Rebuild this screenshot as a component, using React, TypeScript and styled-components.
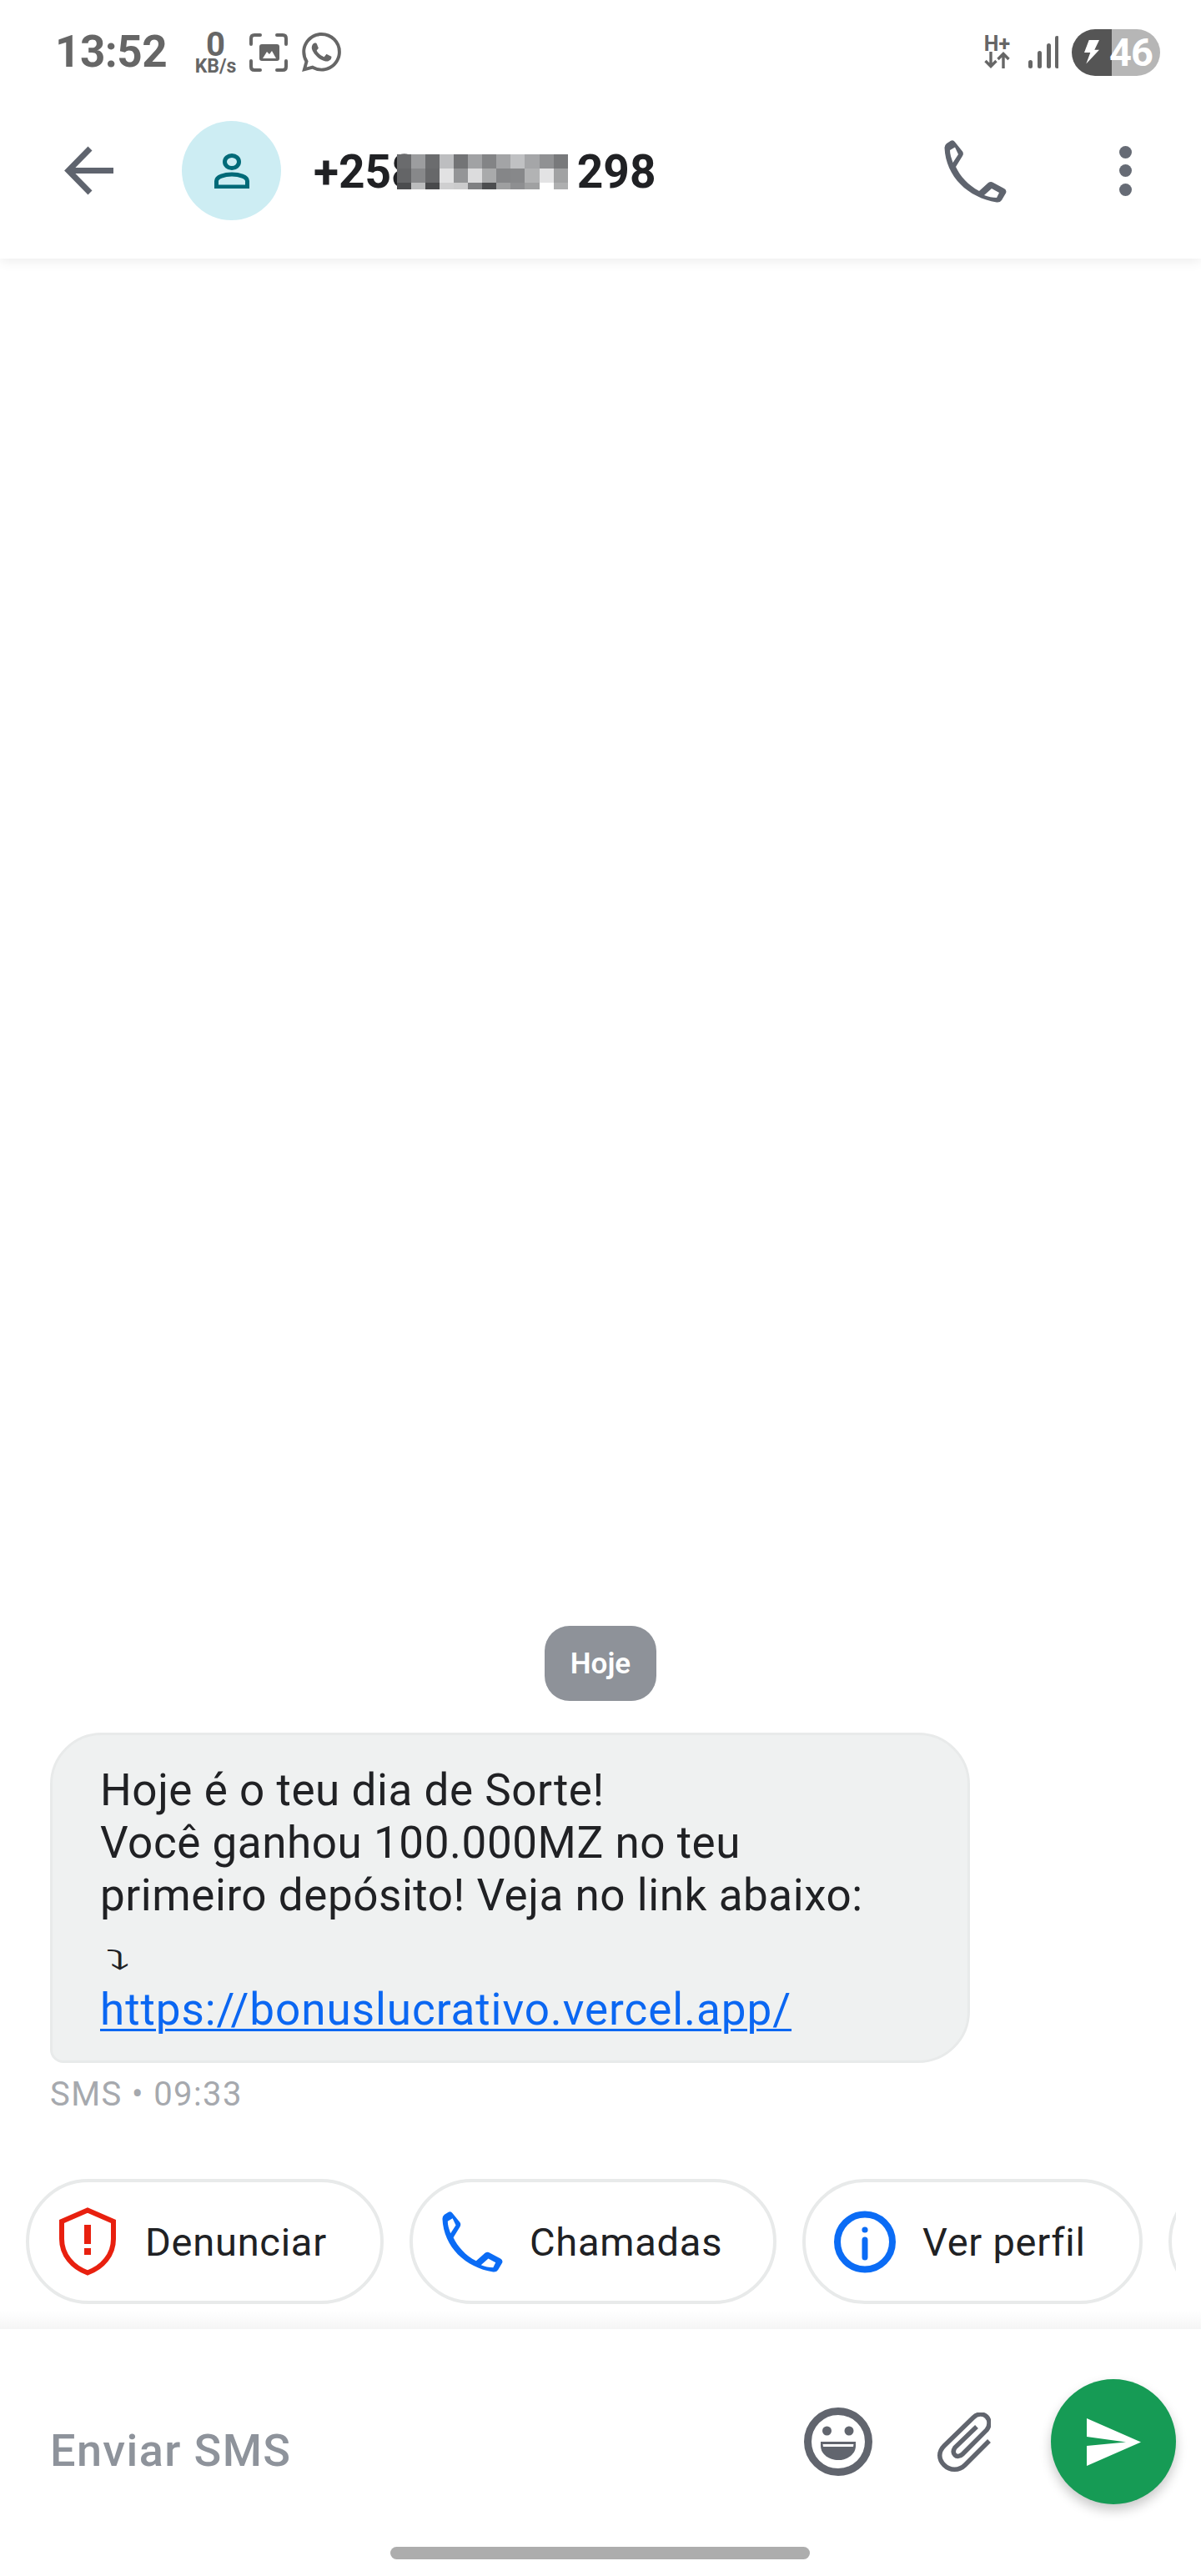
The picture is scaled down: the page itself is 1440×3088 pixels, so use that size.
import React from "react";
import styled, { createGlobalStyle } from "styled-components";
import { SiWhatsapp } from "react-icons/si";

const Global = createGlobalStyle`
  html, body { margin: 0; padding: 0; background: #fff; }
  body { font-family: Roboto, "Liberation Sans", sans-serif; }
`;

const Screen = styled.div`
  width: 1440px;
  height: 3088px;
  display: flex;
  flex-direction: column;
  background: #fff;
  overflow: hidden;
`;

const TopArea = styled.header`
  position: relative;
  z-index: 1;
  flex: none;
  background: #fff;
  box-shadow: 0 3px 14px rgba(0, 0, 0, 0.08);
`;

const StatusBar = styled.div`
  height: 125px;
  display: flex;
  align-items: center;
  padding: 0 49px 0 66px;
  color: #666;
`;

const Time = styled.span`
  font-size: 53px;
  font-weight: 700;
  line-height: 1;
  width: 167px;
  letter-spacing: -0.5px;
`;

const Speed = styled.div`
  width: 51px;
  margin-right: 15px;
  display: flex;
  flex-direction: column;
  align-items: center;
  font-weight: 700;
`;

const SpeedValue = styled.span`
  font-size: 40px;
  line-height: 34px;
`;

const SpeedUnit = styled.span`
  font-size: 23px;
  line-height: 18px;
  white-space: nowrap;
`;

const StatusIcons = styled.div`
  display: flex;
  align-items: center;
  gap: 17px;
`;

const Spacer = styled.div`
  flex: 1;
`;

const NetType = styled.div`
  width: 31px;
  margin-right: 22px;
  display: flex;
  flex-direction: column;
  align-items: center;
  font-size: 25px;
  font-weight: 700;
  line-height: 19px;
`;

const Battery = styled.div`
  width: 106px;
  height: 56px;
  margin-left: 16px;
  border-radius: 28px;
  background: linear-gradient(90deg, #555 45.3%, #b6b6b6 45.3%);
  display: flex;
  align-items: center;
  padding-left: 15px;
  box-sizing: border-box;
  color: #fff;
  font-size: 47px;
  font-weight: 700;
  line-height: 1;
`;

const BatteryLevel = styled.span`
  margin-left: 12px;
  letter-spacing: -1px;
`;

const Header = styled.div`
  height: 185px;
  box-sizing: border-box;
  padding: 0 83px 26px 76px;
  display: flex;
  align-items: center;
`;

const Avatar = styled.div`
  width: 119px;
  height: 119px;
  margin: 0 39px 0 82px;
  flex: none;
  border-radius: 50%;
  background: #cdedf3;
  color: #006a78;
  display: flex;
  align-items: center;
  justify-content: center;
`;

const Title = styled.h1`
  margin: 2px 0 0;
  display: flex;
  align-items: center;
  font-size: 55px;
  font-weight: 700;
  line-height: 64px;
  color: #202124;
`;

const Mosaic = styled.span`
  display: grid;
  grid-template-columns: repeat(12, 17.1px);
  grid-template-rows: 17px 17px 8px;
  margin: 0 11px 0 -25px;
`;

const MosaicCell = styled.span<{ $c: string }>`
  background: ${(p) => p.$c};
`;

const HeaderPhone = styled.div`
  display: flex;
  color: #5f646e;
  margin-right: 135px;
`;

const Dots = styled.div`
  display: flex;
  flex-direction: column;
  gap: 7.5px;
`;

const Dot = styled.span`
  width: 15px;
  height: 15px;
  border-radius: 50%;
  background: #666b75;
`;

const Conversation = styled.main`
  flex: 1;
  display: flex;
  flex-direction: column;
  justify-content: flex-end;
  min-height: 0;
`;

const DateChip = styled.div`
  align-self: center;
  width: 134px;
  height: 90px;
  margin-bottom: 38px;
  border-radius: 30px;
  background: #8e9299;
  color: #fff;
  font-size: 35px;
  font-weight: 600;
  display: flex;
  align-items: center;
  justify-content: center;
`;

const Bubble = styled.div`
  width: 1103px;
  height: 396px;
  margin-left: 60px;
  box-sizing: border-box;
  padding: 35px 40px 0 57px;
  background: #eff1f1;
  border: 3px solid #e8eaea;
  border-radius: 62px 62px 62px 16px;
  color: #202124;
  font-size: 53px;
  font-weight: 450;
  letter-spacing: 0.55px;
  line-height: 63px;
`;

const MessageLine = styled.div`
  white-space: nowrap;
`;

const ArrowLine = styled.div`
  height: 74px;
  font-family: "DejaVu Sans", sans-serif;
  font-size: 32px;
  line-height: 92px;
`;

const ArrowGlyph = styled.span`
  display: inline-block;
  padding-left: 3px;
  transform: scaleX(1.9);
  transform-origin: left center;
`;

const MessageLink = styled.a`
  color: #0b67f2;
  letter-spacing: 0.95px;
  text-decoration: underline;
  text-decoration-thickness: 3px;
  text-underline-offset: 5px;
  white-space: nowrap;
`;

const Meta = styled.div`
  margin: 16px 0 0 60px;
  font-size: 40px;
  letter-spacing: 1.4px;
  line-height: 44px;
  color: #a6a9ae;
`;

const Chips = styled.div`
  width: 1379px;
  height: 150px;
  margin: 79px 0 0 31px;
  display: flex;
  gap: 31px;
  overflow: hidden;
`;

const Chip = styled.button<{ $w: number; $pad: number; $gap: number }>`
  flex: none;
  width: ${(p) => p.$w}px;
  height: 150px;
  box-sizing: border-box;
  padding: 0 0 0 ${(p) => p.$pad}px;
  display: flex;
  align-items: center;
  gap: ${(p) => p.$gap}px;
  background: #fff;
  border: 4px solid #e8eaea;
  border-radius: 75px;
  color: #202124;
  font-family: inherit;
  font-size: 47px;
  font-weight: 450;
  letter-spacing: 0.75px;
`;

const ChipIcon = styled.span<{ $c: string }>`
  display: flex;
  color: ${(p) => p.$c};
`;

const Strip = styled.div`
  height: 22px;
  margin-top: 8px;
  flex: none;
  background: linear-gradient(#fff, #f5f5f5);
`;

const Composer = styled.footer`
  flex: none;
  height: 296px;
  box-sizing: border-box;
  padding: 60px 30px 0 60px;
  display: flex;
  flex-direction: column;
`;

const ComposerRow = styled.div`
  height: 150px;
  display: flex;
  align-items: center;
  color: #61656e;
`;

const Placeholder = styled.span`
  flex: 1;
  padding-top: 22px;
  font-size: 54px;
  font-weight: 500;
  letter-spacing: 1.4px;
  line-height: 64px;
  color: #8e939b;
`;

const ClipSlot = styled.span`
  display: flex;
  margin: 0 72px 0 78px;
`;

const Fab = styled.button`
  width: 150px;
  height: 150px;
  padding: 0;
  border: none;
  border-radius: 50%;
  background: #169b55;
  box-shadow: 0 7px 14px rgba(0, 0, 0, 0.22);
  display: flex;
  align-items: center;
  justify-content: center;
`;

const HomeBar = styled.div`
  width: 503px;
  height: 15px;
  margin: 51px 0 0 408px;
  border-radius: 8px;
  background: #adadad;
`;

const phoneD =
  "M1.5 10 Q1.5 7 4 5 L9 1.8 Q12 .5 13.8 3 L23 14.5 Q24.8 17 23 20 L15 33 C20 44 30 55 43 62 L54 52 Q57 50 60 52 L73 59 Q76.5 61 75 64.5 L70 73 Q68 76 64 75.5 C30 70 3 45 1.5 10 Z M8 13 L14 9.5 L18 18 L11.5 28 C9.5 22 8 18 8 13 Z M49 67 L58 59 L67 64 L64 70 C59 70 54 69 49 67 Z";

const PhoneIcon = ({ w, h }: { w: number; h: number }) => (
  <svg width={w} height={h} viewBox="0 0 76 76">
    <path d={phoneD} fill="currentColor" fillRule="evenodd" />
  </svg>
);

const mosaicRows = [
  ["#6a6b6d", "#9c9d9f", "#6b6c6e", "#bdbec0", "#737476", "#a1a2a4", "#838486", "#a3a4a6", "#c0c1c3", "#a5a6a8", "#909193", "#78797b"],
  ["#646567", "#87888a", "#67686a", "#e2e2e3", "#949597", "#dcdcdd", "#a9aaab", "#858688", "#87888a", "#b2b3b4", "#e3e3e4", "#a1a2a3"],
  ["#4b4c4e", "#bbbcbd", "#48494b", "#cfcfd0", "#cbcbcc", "#7f8082", "#4c4d4f", "#9e9fa0", "#8e8f91", "#a0a1a2", "#ffffff", "#aeafb0"],
];

export default function App() {
  return (
    <Screen>
      <Global />
      <TopArea>
        <StatusBar>
          <Time>13:52</Time>
          <Speed>
            <SpeedValue>0</SpeedValue>
            <SpeedUnit>KB/s</SpeedUnit>
          </Speed>
          <StatusIcons>
            <svg width="46" height="46" viewBox="0 0 46 46" fill="none">
              <path
                d="M2 13 V6 Q2 2 6 2 H13 M33 2 H40 Q44 2 44 6 V13 M44 33 V40 Q44 44 40 44 H33 M13 44 H6 Q2 44 2 40 V33"
                stroke="#666"
                strokeWidth="4"
                strokeLinecap="round"
              />
              <rect x="12" y="13" width="24" height="20" rx="3" fill="#666" />
              <path d="M16 30 L21 22 L24 25 L27 21 L32 30 Z" fill="#fff" />
            </svg>
            <SiWhatsapp size={47} />
          </StatusIcons>
          <Spacer />
          <NetType>
            H+
            <svg width="31" height="20" viewBox="0 0 31 20" fill="none" stroke="#666" strokeWidth="3.4">
              <path d="M8 0 V17 M1.5 11 L8 17.5 L14.5 11" />
              <path d="M23 20 V3 M16.5 9 L23 2.5 L29.5 9" />
            </svg>
          </NetType>
          <svg width="36" height="39" viewBox="0 0 36 39" fill="#666">
            <rect x="0" y="29" width="5" height="10" rx="2.5" />
            <rect x="11" y="18" width="5" height="21" rx="2.5" />
            <rect x="22" y="9" width="5" height="30" rx="2.5" />
            <rect x="32" y="0" width="4.5" height="39" rx="2.2" />
          </svg>
          <Battery>
            <svg width="18" height="29" viewBox="0 0 18 29" fill="#fff">
              <path d="M5.7 0 H18 L12.3 11.7 H18 L2.3 28.5 L7.3 15 H0 Z" />
            </svg>
            <BatteryLevel>46</BatteryLevel>
          </Battery>
        </StatusBar>
        <Header>
          <svg width="60" height="60" viewBox="0 0 60 60" fill="none" stroke="#5f646e" strokeWidth="7">
            <path d="M60 29.5 H8" />
            <path d="M32 3 L6 29.5 L32 56" />
          </svg>
          <Avatar>
            <svg width="42" height="42" viewBox="0 0 42 42" fill="none" stroke="currentColor" strokeWidth="5">
              <ellipse cx="21" cy="10" rx="8.5" ry="7.5" />
              <path d="M2.5 40 V33 C2.5 28 12 25 21 25 S39.5 28 39.5 33 V40 Z" />
            </svg>
          </Avatar>
          <Title>
            +258
            <Mosaic>
              {mosaicRows.flat().map((c, i) => (
                <MosaicCell key={i} $c={c} />
              ))}
            </Mosaic>
            298
          </Title>
          <Spacer />
          <HeaderPhone>
            <PhoneIcon w={76} h={76} />
          </HeaderPhone>
          <Dots>
            <Dot />
            <Dot />
            <Dot />
          </Dots>
        </Header>
      </TopArea>

      <Conversation>
        <DateChip>Hoje</DateChip>
        <Bubble>
          <MessageLine>Hoje é o teu dia de Sorte!</MessageLine>
          <MessageLine>Você ganhou 100.000MZ no teu</MessageLine>
          <MessageLine>primeiro depósito! Veja no link abaixo:</MessageLine>
          <ArrowLine>
            <ArrowGlyph>⤵</ArrowGlyph>
          </ArrowLine>
          <MessageLink>https://bonuslucrativo.vercel.app/</MessageLink>
        </Bubble>
        <Meta>SMS • 09:33</Meta>
        <Chips>
          <Chip $w={429} $pad={36} $gap={35}>
            <ChipIcon $c="#e8200f">
              <svg width="68" height="82" viewBox="0 0 68 82">
                <path
                  d="M34 3.5 L65 17 V38 C65 57 52 72 34 78.5 C16 72 3 57 3 38 V17 Z"
                  fill="none"
                  stroke="currentColor"
                  strokeWidth="6"
                />
                <rect x="30" y="21" width="8" height="23" fill="currentColor" />
                <rect x="30" y="49" width="8" height="8" fill="currentColor" />
              </svg>
            </ChipIcon>
            Denunciar
          </Chip>
          <Chip $w={440} $pad={34} $gap={32}>
            <ChipIcon $c="#0b6cf5">
              <PhoneIcon w={74} h={76} />
            </ChipIcon>
            Chamadas
          </Chip>
          <Chip $w={408} $pad={34} $gap={32}>
            <ChipIcon $c="#0b6cf5">
              <svg width="74" height="75" viewBox="0 0 74 75" fill="none" stroke="currentColor">
                <circle cx="37" cy="37.5" r="33" strokeWidth="8" />
                <circle cx="37" cy="23" r="3.6" fill="currentColor" stroke="none" />
                <path d="M37 35 V56" strokeWidth="7" strokeLinecap="round" />
              </svg>
            </ChipIcon>
            Ver perfil
          </Chip>
          <Chip $w={300} $pad={34} $gap={32} />
        </Chips>
        <Strip />
      </Conversation>

      <Composer>
        <ComposerRow>
          <Placeholder>Enviar SMS</Placeholder>
          <svg width="82" height="82" viewBox="0 0 82 82">
            <circle cx="41" cy="41" r="36.5" fill="none" stroke="currentColor" strokeWidth="9" />
            <circle cx="27.5" cy="28" r="5.5" fill="currentColor" />
            <circle cx="54" cy="28" r="5.5" fill="currentColor" />
            <path d="M20 41 H62 V46 C62 56 52 63 41 63 S20 56 20 46 Z" fill="currentColor" />
            <path d="M22.5 44 H59.5 L59 47 H23 Z" fill="#fff" />
          </svg>
          <ClipSlot>
            <svg width="64" height="71" viewBox="-1 -1 64 71" fill="none" stroke="currentColor" strokeWidth="5.5">
              <path d="M61 33 L32 62 C25 69 14 69 7 62 C0 55 0 46 7 39 L42 5 C47 0 54 0 58 4 C62 8 62 15 58 20 L29 49 C26 52 22 52 20 50 C17 47 18 44 20 41 L46 16" />
            </svg>
          </ClipSlot>
          <Fab aria-label="Enviar">
            <svg width="65" height="57" viewBox="0 0 65 57" fill="#fff">
              <path d="M0 0 L65 28.5 L0 57 V33 L47 28.5 L0 22 Z" />
            </svg>
          </Fab>
        </ComposerRow>
        <HomeBar />
      </Composer>
    </Screen>
  );
}
